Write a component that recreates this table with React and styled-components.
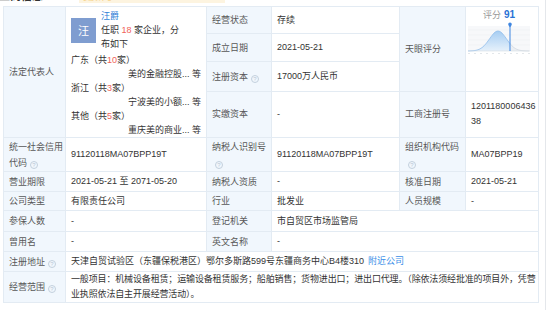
import React from "react";
import styled, { createGlobalStyle } from "styled-components";

const GlobalStyle = createGlobalStyle`
  html, body {
    margin: 0;
    padding: 0;
    background: #fff;
  }
  body {
    font-family: "Liberation Sans", Arial, "Noto Sans CJK SC", sans-serif;
    font-size: 9px;
    color: #333;
  }
`;

const Page = styled.div`
  width: 550px;
  height: 310px;
  overflow: hidden;
  box-sizing: border-box;
  padding-left: 3px;
`;

const Panel = styled.div`
  width: 542px;
  min-height: 330px;
  margin-top: -10px;
  border-right: 1px solid #e4e7eb;
`;

const Header = styled.div`
  height: 16px;
  display: flex;
  align-items: flex-start;
  gap: 36px;
  margin-left: -4px;
  font-size: 11px;
  line-height: 13px;
`;

const Title = styled.span`
  font-weight: bold;
  color: #333;
`;

const Updated = styled.span`
  color: #f6d38c;
  background: #fdf4e0;
  padding: 0 4px;
`;

const Grid = styled.table`
  width: 535px;
  table-layout: fixed;
  border-collapse: collapse;
`;

const Row = styled.tr`
  height: ${(p) => p.$h}px;
`;

const Label = styled.td`
  background: #f1f7fd;
  color: #585858;
  border: 1px solid #e3ebf3;
  padding: 0 2px 0 5px;
  line-height: 16px;
  vertical-align: middle;
  word-break: break-all;
`;

const Value = styled.td`
  background: #fff;
  color: #333;
  border: 1px solid #e3ebf3;
  padding: ${(p) => p.$pad || "0 3px 0 5px"};
  line-height: ${(p) => p.$lh || 15}px;
  vertical-align: ${(p) => (p.$top ? "top" : "middle")};
  letter-spacing: ${(p) => p.$ls || 0}px;
`;

const Help = styled.span`
  display: inline-block;
  box-sizing: border-box;
  width: 8px;
  height: 8px;
  margin-left: 3px;
  border: 1px solid #c3d0dd;
  border-radius: 50%;
  color: #b9c7d6;
  font-size: 6px;
  line-height: 6px;
  text-align: center;
  vertical-align: -1px;
`;

const Person = styled.div`
  display: flex;
  gap: 5px;
  line-height: 14px;
`;

const Avatar = styled.div`
  width: 25px;
  height: 25px;
  margin-top: 9px;
  flex: none;
  background: #7f9dd0;
  color: #fff;
  font-size: 11px;
  display: flex;
  align-items: center;
  justify-content: center;
`;

const PersonInfo = styled.div`
  width: 84px;
`;

const Name = styled.div`
  color: #2f7fd6;
`;

const Red = styled.span`
  color: #f0625a;
`;

const Region = styled.div`
  line-height: 14px;
  margin-top: ${(p) => (p.$first ? 2 : 0)}px;
`;

const Company = styled.div`
  line-height: 14px;
  text-align: right;
  padding-right: 1px;
  white-space: nowrap;
`;

const Score = styled.div`
  text-align: center;
  line-height: 14px;
  color: #999;
  font-size: 9px;
  b {
    color: #2a72d5;
    font-size: 10px;
    margin-left: 3px;
  }
`;

const Link = styled.span`
  color: #3b8fe8;
  margin-left: 4px;
`;

// bell curve points, peak at x=31
const curve = (from, to) => {
  const pts = [];
  for (let x = from; x <= to; x += 1) {
    const y = 29 - 20 * Math.exp(-((x - 31) ** 2) / (2 * 8.5 * 8.5));
    pts.push(`${x},${y.toFixed(2)}`);
  }
  return pts;
};

const Chart = () => {
  const left = curve(1, 43);
  const right = curve(43, 62);
  return (
    <svg width="64" height="34" viewBox="0 0 64 34" style={{ display: "block", margin: "0 auto" }}>
      <defs>
        <linearGradient id="bell" x1="0" y1="0" x2="0" y2="1">
          <stop offset="0" stopColor="#a6cdf2" />
          <stop offset="1" stopColor="#e6f1fb" />
        </linearGradient>
      </defs>
      <rect x="1" y="4" width="62" height="25" fill="#f7f8fa" />
      {[8, 13, 18, 23].map((y) => (
        <line key={y} x1="1" x2="63" y1={y} y2={y} stroke="#eef0f3" strokeWidth="0.6" />
      ))}
      <polygon points={`1,29 ${left.join(" ")} 43,29`} fill="url(#bell)" />
      <polygon points={`43,29 ${right.join(" ")} 62,29`} fill="#eceff3" />
      <polyline points={left.join(" ")} fill="none" stroke="#86b8ea" strokeWidth="0.7" />
      <polyline points={right.join(" ")} fill="none" stroke="#cfd6de" strokeWidth="0.7" />
      <line x1="1" x2="63" y1="29" y2="29" stroke="#d5dbe2" strokeWidth="0.6" />
      {[2, 8, 14, 20, 26, 32, 38, 44, 50, 56, 62].map((x) => (
        <rect key={x} x={x - 0.6} y="31" width="1.2" height="0.8" fill="#c5ccd4" />
      ))}
      <line x1="43" x2="43" y1="2" y2="29" stroke="#3f86e0" strokeWidth="1" />
      <path d="M43 0.5 a1.8 1.8 0 0 1 1.8 1.8 c0 1.2 -1.8 3 -1.8 3 c0 0 -1.8 -1.8 -1.8 -3 a1.8 1.8 0 0 1 1.8 -1.8z" fill="#3f86e0" />
    </svg>
  );
};

export default function App() {
  return (
    <Page>
      <GlobalStyle />
      <Panel>
        <Header>
          <Title>工商信息</Title>
          <Updated>更新于 2021-06-08 17:32:06</Updated>
        </Header>
        <Grid>
          <colgroup>
            <col style={{ width: 62 }} />
            <col style={{ width: 141 }} />
            <col style={{ width: 65 }} />
            <col style={{ width: 128 }} />
            <col style={{ width: 66 }} />
            <col style={{ width: 73 }} />
          </colgroup>
          <tbody>
            <Row $h={27}>
              <Label rowSpan={4}>法定代表人</Label>
              <Value rowSpan={4} $top $pad="2px 4px 0 5px" $lh={14}>
                <Person>
                  <Avatar>汪</Avatar>
                  <PersonInfo>
                    <Name>汪爵</Name>
                    <div>
                      任职 <Red>18</Red> 家企业，分布如下
                    </div>
                  </PersonInfo>
                </Person>
                <Region $first>
                  广东（共<Red>10</Red>家）
                </Region>
                <Company>美的金融控股... 等</Company>
                <Region>
                  浙江（共<Red>3</Red>家）
                </Region>
                <Company>宁波美的小额... 等</Company>
                <Region>
                  其他（共<Red>5</Red>家）
                </Region>
                <Company>重庆美的商业... 等</Company>
              </Value>
              <Label>经营状态</Label>
              <Value>存续</Value>
              <Label rowSpan={3}>天眼评分</Label>
              <Value rowSpan={3} $top $pad="1px 6px 0 0">
                <Score>
                  评分<b>91</b>
                </Score>
                <Chart />
              </Value>
            </Row>
            <Row $h={28}>
              <Label>成立日期</Label>
              <Value>2021-05-21</Value>
            </Row>
            <Row $h={29}>
              <Label>
                注册资本<Help>?</Help>
              </Label>
              <Value>17000万人民币</Value>
            </Row>
            <Row $h={46}>
              <Label>实缴资本</Label>
              <Value>-</Value>
              <Label>工商注册号</Label>
              <Value>
                1201180006436
                <br />
                38
              </Value>
            </Row>
            <Row $h={34}>
              <Label>
                统一社会信用代码<Help>?</Help>
              </Label>
              <Value>91120118MA07BPP19T</Value>
              <Label>
                纳税人识别号<Help>?</Help>
              </Label>
              <Value>91120118MA07BPP19T</Value>
              <Label>
                组织机构代码<Help>?</Help>
              </Label>
              <Value>MA07BPP19</Value>
            </Row>
            <Row $h={20}>
              <Label>营业期限</Label>
              <Value>2021-05-21 至 2071-05-20</Value>
              <Label>纳税人资质</Label>
              <Value>-</Value>
              <Label>核准日期</Label>
              <Value>2021-05-21</Value>
            </Row>
            <Row $h={19}>
              <Label>公司类型</Label>
              <Value>有限责任公司</Value>
              <Label>行业</Label>
              <Value>批发业</Value>
              <Label>人员规模</Label>
              <Value>-</Value>
            </Row>
            <Row $h={21}>
              <Label>参保人数</Label>
              <Value>-</Value>
              <Label>登记机关</Label>
              <Value colSpan={3}>市自贸区市场监管局</Value>
            </Row>
            <Row $h={20}>
              <Label>曾用名</Label>
              <Value>-</Value>
              <Label>英文名称</Label>
              <Value colSpan={3}>-</Value>
            </Row>
            <Row $h={20}>
              <Label>
                注册地址<Help>?</Help>
              </Label>
              <Value colSpan={5}>
                天津自贸试验区（东疆保税港区）鄂尔多斯路599号东疆商务中心B4楼310
                <Link>附近公司</Link>
              </Value>
            </Row>
            <Row $h={31}>
              <Label>
                经营范围<Help>?</Help>
              </Label>
              <Value colSpan={5} $pad="0 0 0 5px" $ls={-0.15}>
                一般项目：机械设备租赁；运输设备租赁服务；船舶销售；货物进出口；进出口代理。（除依法须经批准的项目外，凭营业执照依法自主开展经营活动）。
              </Value>
            </Row>
          </tbody>
        </Grid>
      </Panel>
    </Page>
  );
}
